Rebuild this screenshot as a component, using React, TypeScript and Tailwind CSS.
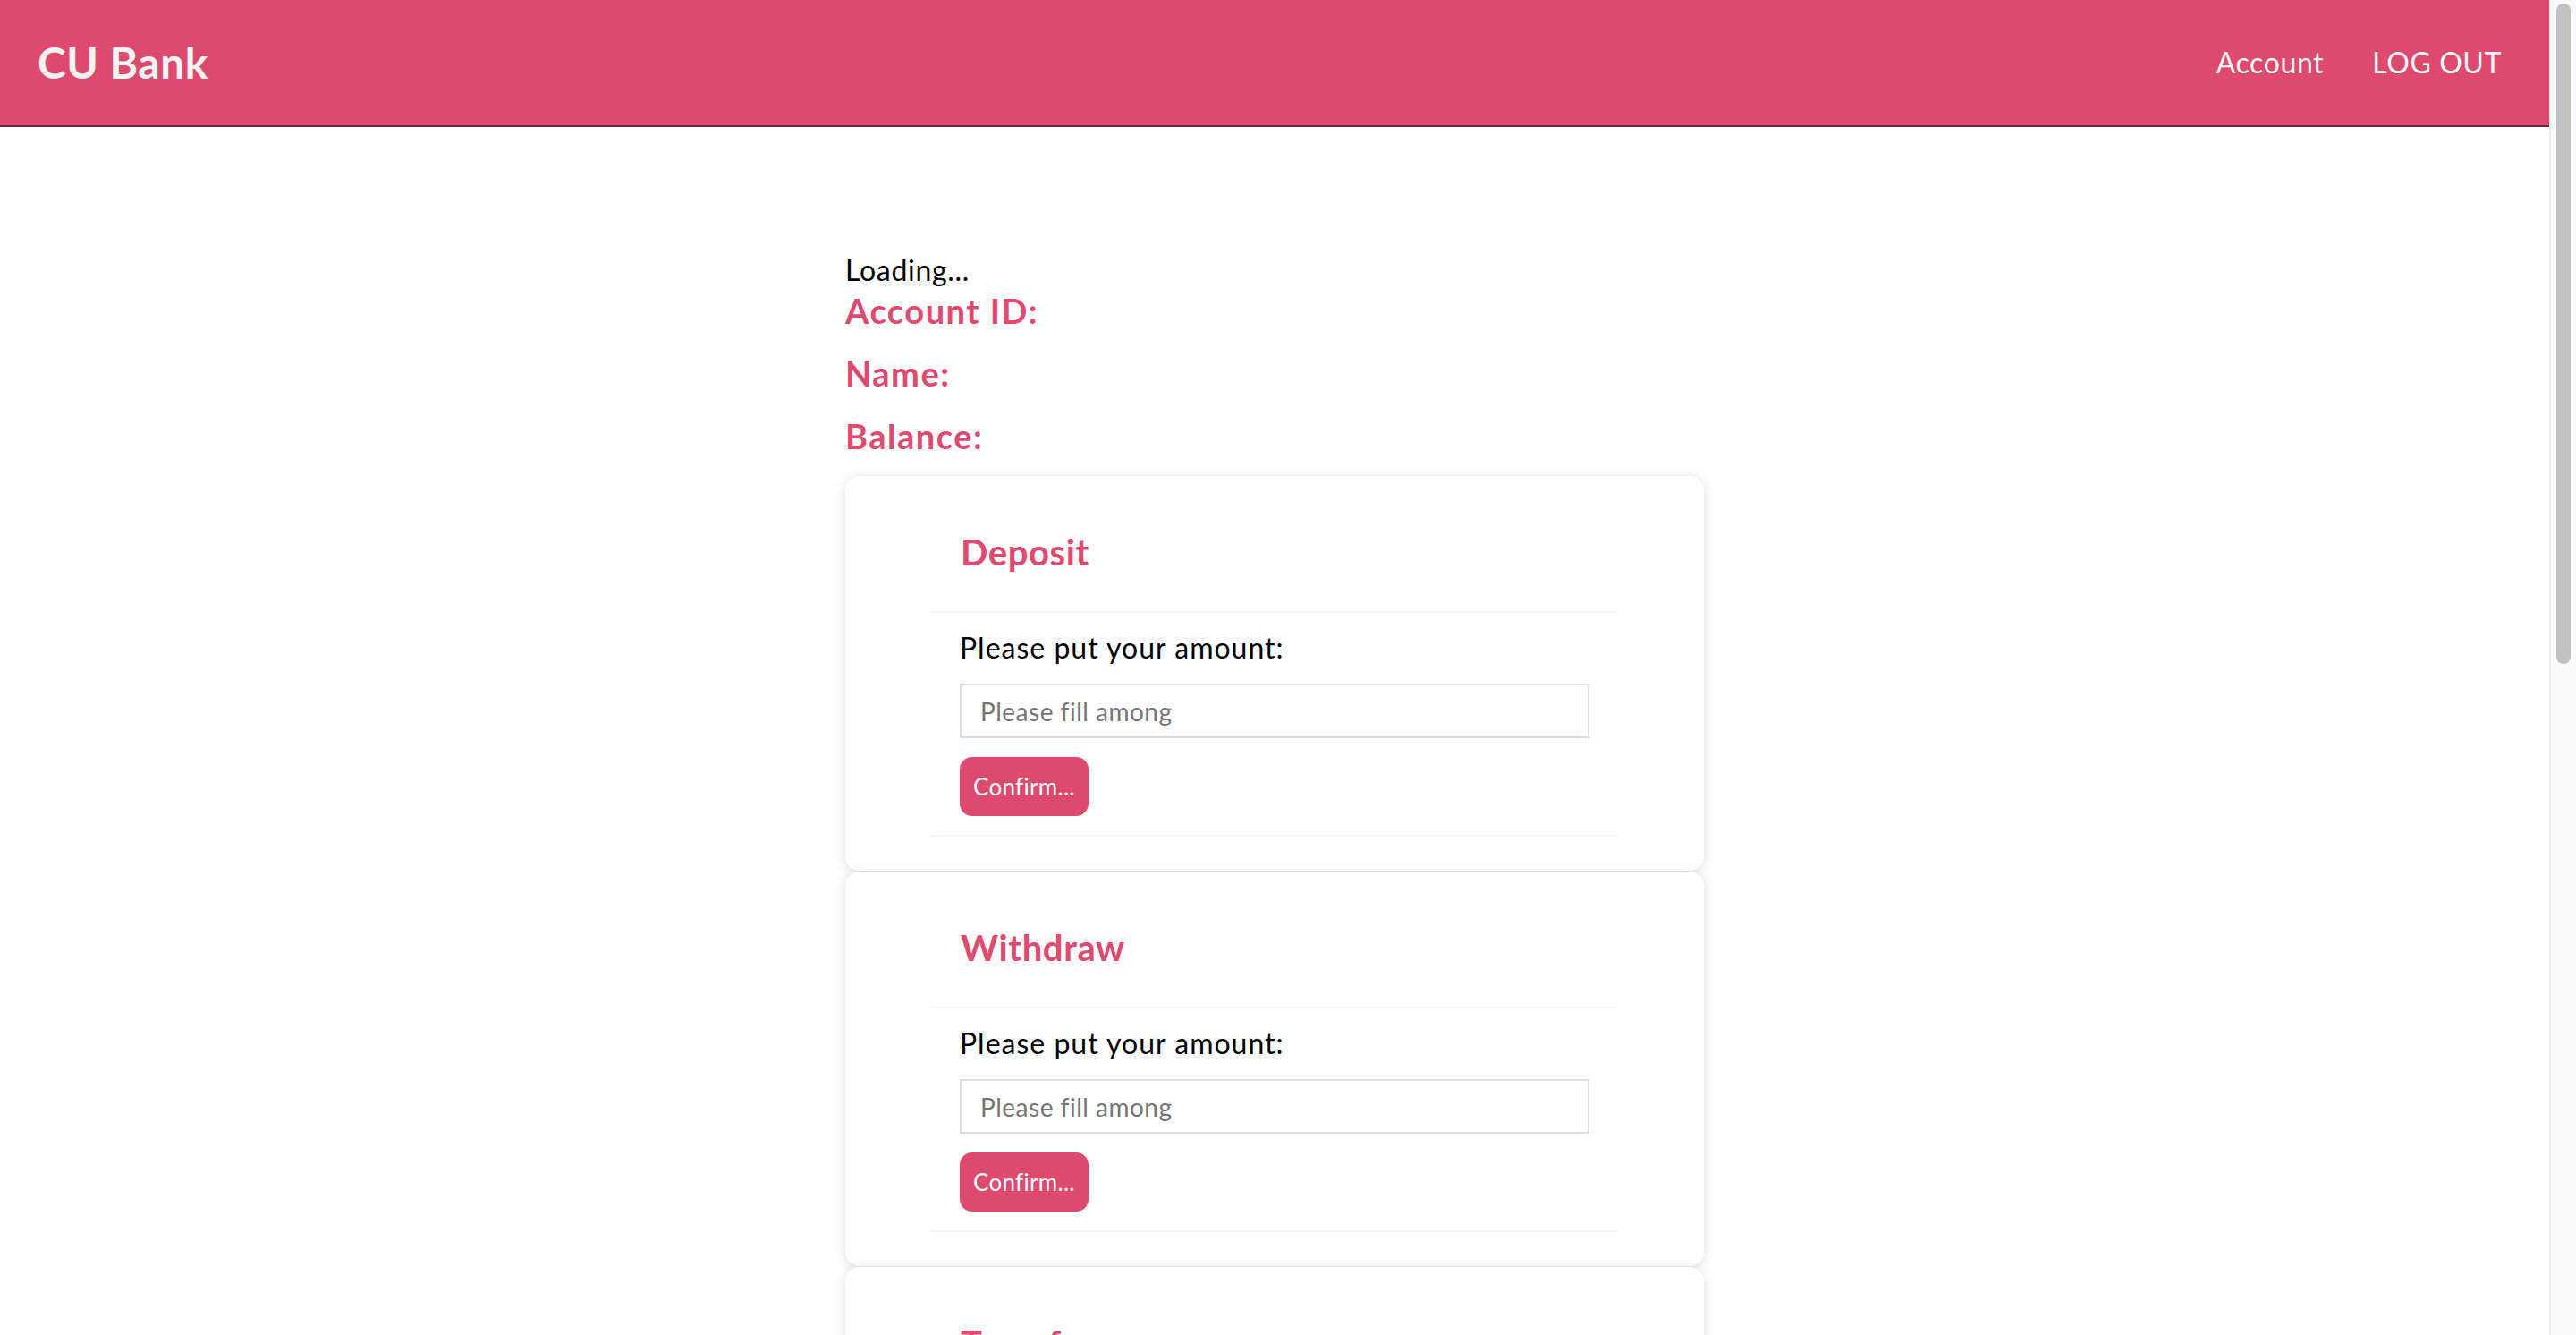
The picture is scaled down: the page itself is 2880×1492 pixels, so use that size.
import React from 'react';

const font = { fontFamily: 'Lato, "Open Sans", sans-serif' };

interface ActionCardProps {
  title: string;
}

const ActionCard: React.FC<ActionCardProps> = ({ title }) => {
  return (
    <div className="mt-[1px] w-full rounded-[16px] bg-white shadow-[0_2px_14px_rgba(0,0,0,0.13)]">
      <div className="mx-auto w-[80%]">
        <div className="border-b-2 border-[#f6f6f6] px-[33px] pt-[61px] pb-[42px]">
          <h2 className="text-[40px] leading-[48px] font-bold tracking-[0.6px] text-[#e04a70]">{title}</h2>
        </div>
        <div className="border-b-2 border-[#f6f6f6] px-[32px] pt-[15px] pb-[21px]">
          <p className="text-[32px] leading-[48px] tracking-[1px] text-black">Please put your amount:</p>
          <input
            type="text"
            placeholder="Please fill among"
            className="mt-[16px] block h-[61px] w-full border-2 border-[#dedede] bg-white px-[21px] text-[28px] tracking-[0.5px] text-black outline-none placeholder:text-[#767676]"
            style={font}
          />
          <button
            className="mt-[21px] h-[66px] rounded-[14px] bg-[#de4a6e] px-[15px] text-[26px] tracking-[0.3px] text-white"
            style={font}
          >
            Confirm...
          </button>
        </div>
        <div className="h-[38px]" />
      </div>
    </div>
  );
};

const App: React.FC = () => {
  return (
    <div className="flex h-screen w-full overflow-hidden bg-white" style={font}>
      <div className="flex-1 overflow-hidden">
        <nav className="flex h-[142px] items-center justify-between border-b-2 border-[#75203d] bg-[#dd4a6e] pl-[42px] pr-[53px]">
          <span className="text-[48px] font-bold tracking-[0.5px] text-[#f3f3f3]">CU Bank</span>
          <div className="flex items-center gap-[54px]">
            {['Account', 'LOG OUT'].map((item) => (
              <a key={item} href="#" className="text-[32px] font-normal tracking-[0.6px] text-[#f7f7f7]">
                {item}
              </a>
            ))}
          </div>
        </nav>

        <main className="mx-auto w-[960px] pt-[136px]">
          <p className="text-[32px] leading-[48px] tracking-[0.7px] text-black">Loading...</p>
          <h3 className="text-[38px] leading-[42px] font-bold tracking-[1.5px] text-[#e04a70]">Account ID:</h3>
          <h3 className="mt-[28px] text-[38px] leading-[42px] font-bold tracking-[1.5px] text-[#e04a70]">Name:</h3>
          <h3 className="mt-[28px] text-[38px] leading-[42px] font-bold tracking-[1.5px] text-[#e04a70]">Balance:</h3>
          <div className="mt-[23px] flex flex-col">
            {['Deposit', 'Withdraw', 'Transfer'].map((t) => (
              <ActionCard key={t} title={t} />
            ))}
          </div>
        </main>
      </div>

      <div className="flex w-[30px] shrink-0 justify-center border-l-2 border-[#ececec] bg-[#fafafa] pt-[4px]">
        <div className="h-[738px] w-[16px] rounded-full bg-[#c1c1c1]" />
      </div>
    </div>
  );
};

export default App;
